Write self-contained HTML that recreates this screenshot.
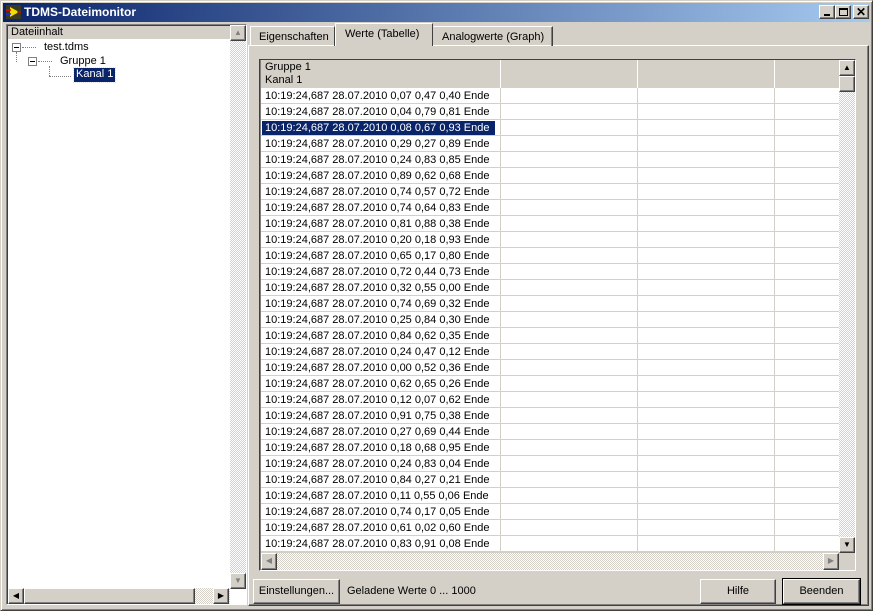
<!DOCTYPE html>
<html><head><meta charset="utf-8"><style>
*{margin:0;padding:0;box-sizing:border-box}
body{width:873px;height:611px;background:#d4d0c8;font-family:"Liberation Sans",sans-serif;font-size:11px;color:#000;position:relative;overflow:hidden}
.a{position:absolute}
.raised{background:#d4d0c8;border:1px solid;border-color:#fff #404040 #404040 #fff;box-shadow:inset -1px -1px 0 #808080}
.sunk{border:1px solid;border-color:#808080 #fff #fff #808080;box-shadow:inset 1px 1px 0 #404040}
.track{background-color:#e6e4df;background-image:repeating-conic-gradient(#fff 0 25%,#d4d0c8 0 50%);background-size:2px 2px}
.row{position:absolute;left:0;height:16px;line-height:15px;border-bottom:1px solid #d4d0c8;width:578px;background:#fff}
.row span{position:absolute;left:4px;top:1px;white-space:nowrap}
.sel{position:absolute;left:1px;top:1px;height:14px;width:233px;background:#0a246a;color:#fff}
.btn{position:absolute;background:#d4d0c8;border:1px solid;border-color:#fff #404040 #404040 #fff;box-shadow:inset -1px -1px 0 #808080;text-align:center;line-height:22px}
</style></head><body>
<div class="a" style="left:0;top:0;width:873px;height:611px;border:1px solid;border-color:#d4d0c8 #404040 #404040 #d4d0c8;box-shadow:inset 1px 1px 0 #fff,inset -1px -1px 0 #808080"></div>
<div class="a" style="left:3px;top:3px;width:867px;height:19px;background:linear-gradient(90deg,#0a246a,#a6caf0)"></div>
<svg class="a" style="left:5px;top:4px" width="17" height="16"><rect x="1" y="1" width="15" height="14" fill="#3a3a20"/><polygon points="5,3 14,8 5,13" fill="#f0e000"/><line x1="1" y1="6" x2="6" y2="6" stroke="#e00" stroke-width="1.5"/><line x1="1" y1="10" x2="6" y2="10" stroke="#22f" stroke-width="1.5"/><line x1="12" y1="8" x2="16" y2="8" stroke="#e00"/></svg>
<div class="a" style="left:24px;top:5px;color:#fff;font-weight:bold;font-size:12px">TDMS-Dateimonitor</div>
<div class="btn" style="left:819px;top:5px;width:16px;height:14px"><div class="a" style="left:4px;top:8px;width:6px;height:2px;background:#000"></div></div>
<div class="btn" style="left:835px;top:5px;width:16px;height:14px"><div class="a" style="left:3px;top:2px;width:9px;height:8px;border:1px solid #000;border-top-width:2px"></div></div>
<div class="btn" style="left:853px;top:5px;width:16px;height:14px;line-height:12px;font-weight:bold;font-size:12px">✕</div>

<div class="a sunk" style="left:6px;top:24px;width:241px;height:581px;background:#fff"></div>
<div class="a" style="left:8px;top:26px;width:222px;height:13px;background:#d4d0c8;line-height:13px;padding-left:3px">Dateiinhalt</div>
<div class="a" style="left:12px;top:43px;width:9px;height:9px;border:1px solid #808080;background:#fff"><div class="a" style="left:1px;top:3px;width:5px;height:1px;background:#000"></div></div>
<div class="a" style="left:22px;top:47px;width:14px;border-top:1px dotted #808080"></div>
<div class="a" style="left:16px;top:52px;height:10px;border-left:1px dotted #808080"></div>
<div class="a" style="left:44px;top:41px">test.tdms</div>
<div class="a" style="left:28px;top:57px;width:9px;height:9px;border:1px solid #808080;background:#fff"><div class="a" style="left:1px;top:3px;width:5px;height:1px;background:#000"></div></div>
<div class="a" style="left:38px;top:61px;width:14px;border-top:1px dotted #808080"></div>
<div class="a" style="left:49px;top:66px;height:10px;border-left:1px dotted #808080"></div>
<div class="a" style="left:49px;top:76px;width:22px;border-top:1px dotted #808080"></div>
<div class="a" style="left:60px;top:55px">Gruppe 1</div>
<div class="a" style="left:74px;top:68px;height:14px;padding:0 2px;background:#0a246a;color:#fff;line-height:13px;outline:1px dotted #ff0">Kanal 1</div>
<div class="a track" style="left:230px;top:25px;width:16px;height:564px"></div>
<div class="a raised" style="left:230px;top:25px;width:16px;height:16px;color:#808080;font-size:8px;text-align:center;line-height:13px">▲</div>
<div class="a raised" style="left:230px;top:573px;width:16px;height:16px;color:#808080;font-size:8px;text-align:center;line-height:13px">▼</div>
<div class="a track" style="left:8px;top:588px;width:222px;height:16px"></div>
<div class="a raised" style="left:8px;top:588px;width:16px;height:16px;font-size:8px;text-align:center;line-height:13px">◀</div>
<div class="a raised" style="left:24px;top:588px;width:171px;height:16px"></div>
<div class="a raised" style="left:213px;top:588px;width:16px;height:16px;font-size:8px;text-align:center;line-height:13px">▶</div>

<div class="a" style="left:248px;top:45px;width:621px;height:561px;border:1px solid;border-color:#fff #404040 #404040 #fff;box-shadow:inset -1px -1px 0 #808080"></div>
<div class="a" style="left:250px;top:26px;width:85px;height:20px;border:1px solid;border-color:#fff #404040 transparent #fff;border-bottom:none;padding:4px 0 0 8px">Eigenschaften</div>
<div class="a" style="left:335px;top:23px;width:98px;height:23px;background:#d4d0c8;border:1px solid;border-color:#fff #404040 transparent #fff;border-bottom:none;padding:4px 0 0 9px">Werte (Tabelle)</div>
<div class="a" style="left:433px;top:26px;width:120px;height:20px;border:1px solid;border-color:#fff #404040 transparent transparent;border-bottom:none;box-shadow:inset -1px 0 0 #808080;padding:4px 0 0 8px">Analogwerte (Graph)</div>

<div class="a" style="left:259px;top:59px;width:597px;height:512px;border:1px solid;border-color:#404040 #fff #fff #404040;box-shadow:1px 1px 0 #808080 inset"></div>
<div class="a" style="left:261px;top:60px;width:578px;height:28px;background:#d4d0c8">
<div class="a" style="left:4px;top:1px;line-height:13px">Gruppe 1<br>Kanal 1</div>
</div>
<div class="a" style="left:261px;top:88px;width:578px;height:465px;overflow:hidden">
<div class="row" style="top:0"><span>10:19:24,687 28.07.2010 0,07 0,47 0,40 Ende</span></div>
<div class="row" style="top:16px"><span>10:19:24,687 28.07.2010 0,04 0,79 0,81 Ende</span></div>
<div class="row" style="top:32px"><div class="sel"></div><span style="color:#fff">10:19:24,687 28.07.2010 0,08 0,67 0,93 Ende</span></div>
<div class="row" style="top:48px"><span>10:19:24,687 28.07.2010 0,29 0,27 0,89 Ende</span></div>
<div class="row" style="top:64px"><span>10:19:24,687 28.07.2010 0,24 0,83 0,85 Ende</span></div>
<div class="row" style="top:80px"><span>10:19:24,687 28.07.2010 0,89 0,62 0,68 Ende</span></div>
<div class="row" style="top:96px"><span>10:19:24,687 28.07.2010 0,74 0,57 0,72 Ende</span></div>
<div class="row" style="top:112px"><span>10:19:24,687 28.07.2010 0,74 0,64 0,83 Ende</span></div>
<div class="row" style="top:128px"><span>10:19:24,687 28.07.2010 0,81 0,88 0,38 Ende</span></div>
<div class="row" style="top:144px"><span>10:19:24,687 28.07.2010 0,20 0,18 0,93 Ende</span></div>
<div class="row" style="top:160px"><span>10:19:24,687 28.07.2010 0,65 0,17 0,80 Ende</span></div>
<div class="row" style="top:176px"><span>10:19:24,687 28.07.2010 0,72 0,44 0,73 Ende</span></div>
<div class="row" style="top:192px"><span>10:19:24,687 28.07.2010 0,32 0,55 0,00 Ende</span></div>
<div class="row" style="top:208px"><span>10:19:24,687 28.07.2010 0,74 0,69 0,32 Ende</span></div>
<div class="row" style="top:224px"><span>10:19:24,687 28.07.2010 0,25 0,84 0,30 Ende</span></div>
<div class="row" style="top:240px"><span>10:19:24,687 28.07.2010 0,84 0,62 0,35 Ende</span></div>
<div class="row" style="top:256px"><span>10:19:24,687 28.07.2010 0,24 0,47 0,12 Ende</span></div>
<div class="row" style="top:272px"><span>10:19:24,687 28.07.2010 0,00 0,52 0,36 Ende</span></div>
<div class="row" style="top:288px"><span>10:19:24,687 28.07.2010 0,62 0,65 0,26 Ende</span></div>
<div class="row" style="top:304px"><span>10:19:24,687 28.07.2010 0,12 0,07 0,62 Ende</span></div>
<div class="row" style="top:320px"><span>10:19:24,687 28.07.2010 0,91 0,75 0,38 Ende</span></div>
<div class="row" style="top:336px"><span>10:19:24,687 28.07.2010 0,27 0,69 0,44 Ende</span></div>
<div class="row" style="top:352px"><span>10:19:24,687 28.07.2010 0,18 0,68 0,95 Ende</span></div>
<div class="row" style="top:368px"><span>10:19:24,687 28.07.2010 0,24 0,83 0,04 Ende</span></div>
<div class="row" style="top:384px"><span>10:19:24,687 28.07.2010 0,84 0,27 0,21 Ende</span></div>
<div class="row" style="top:400px"><span>10:19:24,687 28.07.2010 0,11 0,55 0,06 Ende</span></div>
<div class="row" style="top:416px"><span>10:19:24,687 28.07.2010 0,74 0,17 0,05 Ende</span></div>
<div class="row" style="top:432px"><span>10:19:24,687 28.07.2010 0,61 0,02 0,60 Ende</span></div>
<div class="row" style="top:448px"><span>10:19:24,687 28.07.2010 0,83 0,91 0,08 Ende</span></div>
</div>
<div class="a" style="left:500px;top:60px;width:1px;height:493px;background:#d4d0c8"></div>
<div class="a" style="left:500px;top:60px;width:1px;height:28px;background:#fff"></div>
<div class="a" style="left:637px;top:60px;width:1px;height:493px;background:#d4d0c8"></div>
<div class="a" style="left:637px;top:60px;width:1px;height:28px;background:#fff"></div>
<div class="a" style="left:774px;top:60px;width:1px;height:493px;background:#d4d0c8"></div>
<div class="a" style="left:774px;top:60px;width:1px;height:28px;background:#fff"></div>
<div class="a track" style="left:839px;top:60px;width:16px;height:493px"></div>
<div class="a raised" style="left:839px;top:60px;width:16px;height:16px;font-size:8px;text-align:center;line-height:13px">▲</div>
<div class="a raised" style="left:839px;top:76px;width:16px;height:16px"></div>
<div class="a raised" style="left:839px;top:537px;width:16px;height:16px;font-size:8px;text-align:center;line-height:13px">▼</div>
<div class="a track" style="left:261px;top:553px;width:578px;height:17px"></div>
<div class="a raised" style="left:261px;top:553px;width:16px;height:17px;color:#808080;font-size:8px;text-align:center;line-height:14px">◀</div>
<div class="a raised" style="left:823px;top:553px;width:16px;height:17px;color:#808080;font-size:8px;text-align:center;line-height:14px">▶</div>

<div class="btn" style="left:253px;top:579px;width:87px;height:25px">Einstellungen...</div>
<div class="a" style="left:347px;top:585px">Geladene Werte 0 ... 1000</div>
<div class="btn" style="left:700px;top:579px;width:76px;height:25px">Hilfe</div>
<div class="btn" style="left:783px;top:579px;width:77px;height:25px;outline:1px solid #000">Beenden</div>
</body></html>
